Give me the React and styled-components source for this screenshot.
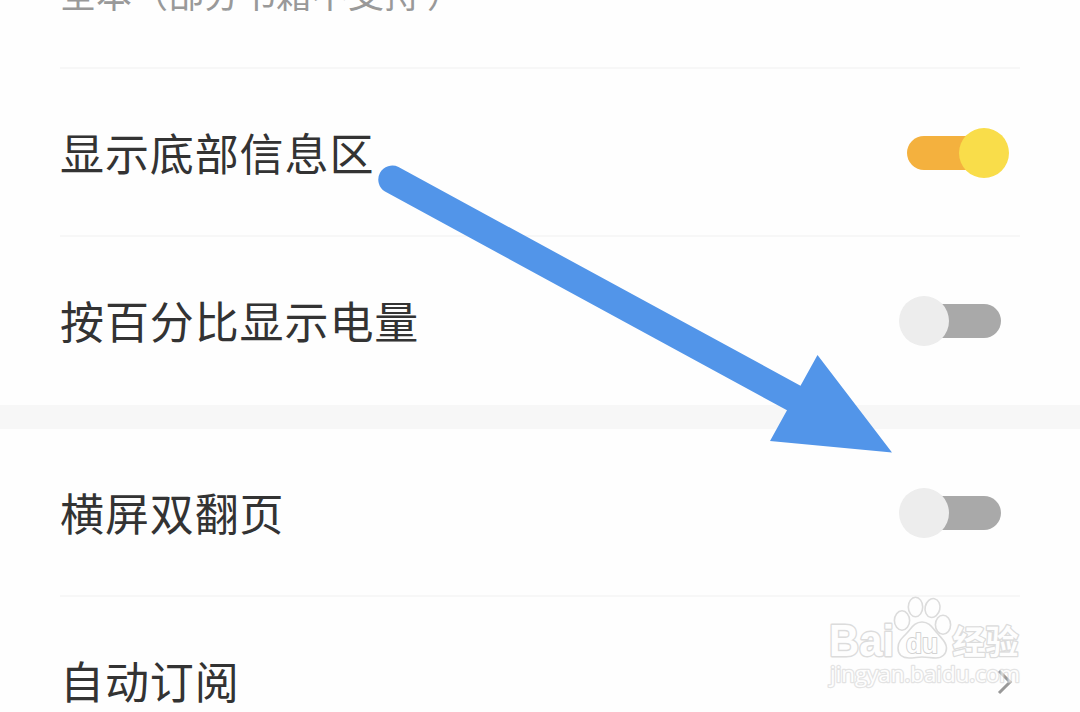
import React from "react";
import styled, { createGlobalStyle, css } from "styled-components";

const GlobalStyle = createGlobalStyle`
	* {
		box-sizing: border-box;
	}
	body {
		margin: 0;
		background-color: #fefefe;
		font-family: "Noto Sans CJK SC", "Liberation Sans", sans-serif;
	}
`;

const Page = styled.main`
	width: 1080px;
	height: 712px;
	position: relative;
	overflow: hidden;
	display: flex;
	flex-direction: column;
`;
const Group = styled.section`
	padding: 0 60px;
	flex-shrink: 0;
`;
const Hint = styled.p`
	margin: 0;
	height: 69px;
	overflow: hidden;
	display: flex;
	align-items: flex-end;
	padding-bottom: 51px;
	line-height: 52px;
	font-size: 36px;
	color: #999;
	white-space: nowrap;
	box-shadow: inset 0 -2px #f7f7f7;
`;
const CloseParen = styled.span`
	margin-left: 7px;
`;
const Row = styled.div`
	height: 168px;
	display: flex;
	align-items: center;
	justify-content: space-between;
	padding-right: 11px;
	${({ $divider }) =>
		$divider &&
		css`
			box-shadow: inset 0 -2px #f7f7f7;
		`}
`;
const Label = styled.span`
	font-size: 44px;
	line-height: 64px;
	letter-spacing: 0.9px;
	padding-bottom: 2px;
	color: #333;
	white-space: nowrap;
`;
const Gap = styled.div`
	height: 24px;
	flex-shrink: 0;
	background-color: #f7f7f7;
`;
const Knob = styled.span`
	width: 50px;
	height: 50px;
	border-radius: 50%;
	flex-shrink: 0;
	background-color: #ededed;
`;
const Toggle = styled.button`
	display: flex;
	align-items: center;
	width: 110px;
	height: 50px;
	padding: 0;
	border: none;
	background: none;
	position: relative;
	z-index: 0;
	&::before {
		content: "";
		position: absolute;
		z-index: -1;
		left: 8px;
		top: 8px;
		width: 94px;
		height: 34px;
		border-radius: 17px;
		background-color: #a9a9a9;
	}
	${({ $on }) =>
		$on &&
		css`
			justify-content: flex-end;
			&::before {
				background-color: #f4b13e;
			}
			${Knob} {
				background-color: #f9dd4a;
			}
		`}
`;
const Chevron = styled.svg`
	width: 16px;
	height: 26px;
	margin: 2px -4px 0 0;
`;
const Overlay = styled.svg`
	position: absolute;
	top: 0;
	left: 0;
	pointer-events: none;
`;
const Watermark = styled.g`
	fill: #fefefe;
	stroke: #dcdcdc;
	stroke-linejoin: round;
	text {
		paint-order: stroke;
	}
`;

const Switch = ({ on = false }) => (
	<Toggle $on={on} role="switch" aria-checked={on}>
		<Knob />
	</Toggle>
);

const Arrow = () => (
	<Overlay width="1080" height="712" viewBox="0 0 1080 712">
		<path
			d="M398.500 167 L800.500 385.700 L817.500 355 L892 452.500 L770 441 L787 410.300 L385 191.500 A14 14 0 0 1 398.500 167Z"
			fill="#5295e9"
		/>
	</Overlay>
);

const BaiduMark = () => (
	<Overlay width="1080" height="712" viewBox="0 0 1080 712">
		<Watermark>
			<g strokeWidth="1.6">
				<ellipse cx="902" cy="620.500" rx="7.600" ry="9.700" />
				<ellipse cx="915.500" cy="607" rx="7.200" ry="9.700" />
				<ellipse cx="932.500" cy="608" rx="7.400" ry="9.500" transform="rotate(12 932.500 608)" />
				<ellipse cx="943" cy="624.700" rx="7.600" ry="9.500" />
				<path d="M922 622 C914 622 911 629 906 634 C901 639 898 642 898 648 C898 655 903 658 909 658 C914 658 918 657 922 657 C927 657 931 658 936 658 C942 658 946.500 654 946.500 648 C946.500 642 942 639 938 634 C933 629 930 622 922 622Z" />
			</g>
			<text
				x="829"
				y="656"
				fontFamily="Liberation Sans"
				fontWeight="700"
				fontSize="44"
				strokeWidth="2.800"
				textLength="65"
				lengthAdjust="spacingAndGlyphs"
			>
				Bai
			</text>
			<text
				x="906"
				y="652.500"
				fontFamily="Liberation Sans"
				fontWeight="700"
				fontSize="27"
				stroke="#d2d2d2"
				strokeWidth="2"
				textLength="32"
				lengthAdjust="spacingAndGlyphs"
			>
				du
			</text>
			<text
				x="952.500"
				y="654"
				fontFamily="Noto Sans CJK SC"
				fontWeight="700"
				fontSize="33"
				strokeWidth="2.600"
			>
				经验
			</text>
			<text
				x="830"
				y="682"
				fontFamily="Open Sans"
				fontWeight="500"
				fontSize="21"
				stroke="#d2d2d2"
				strokeWidth="2.400"
				opacity="0.6"
				textLength="190"
				lengthAdjust="spacingAndGlyphs"
			>
				jingyan.baidu.com
			</text>
		</Watermark>
	</Overlay>
);

export default function App() {
	return (
		<>
			<GlobalStyle />
			<Page>
				<Group>
					<Hint>
						全本（部分书籍不支持<CloseParen>）</CloseParen>
					</Hint>
					<Row $divider>
						<Label>显示底部信息区</Label>
						<Switch on />
					</Row>
					<Row>
						<Label>按百分比显示电量</Label>
						<Switch />
					</Row>
				</Group>
				<Gap />
				<Group>
					<Row $divider>
						<Label>横屏双翻页</Label>
						<Switch />
					</Row>
					<Row>
						<Label>自动订阅</Label>
						<Chevron viewBox="0 0 16 26" fill="none" stroke="#999" strokeWidth="3">
							<path d="M2 2 L13 13 L2 24" />
						</Chevron>
					</Row>
				</Group>
				<Arrow />
				<BaiduMark />
			</Page>
		</>
	);
}
